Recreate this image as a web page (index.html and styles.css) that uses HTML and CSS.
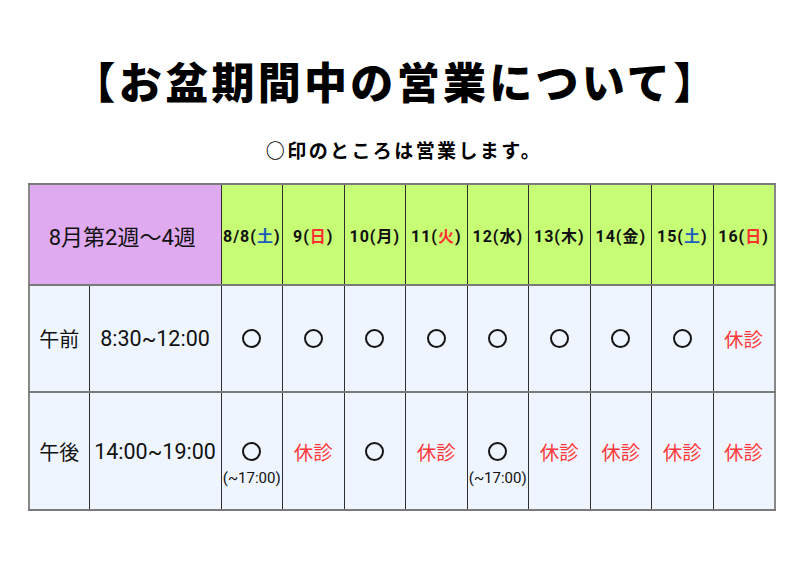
FILE: index.html
```html
<!DOCTYPE html>
<html lang="ja">
<head>
<meta charset="utf-8">
<link rel="stylesheet" href="styles.css">
</head>
<body>
<div class="page">
  <h1 class="title">【お盆期間中の営業について】</h1>
  <p class="note">○印のところは営業します。</p>
  <table class="sched">
    <colgroup>
      <col class="c-label"><col class="c-time">
      <col class="c-day"><col class="c-day"><col class="c-day"><col class="c-day"><col class="c-day"><col class="c-day"><col class="c-day"><col class="c-day"><col class="c-day">
    </colgroup>
    <tr class="head">
      <th colspan="2" class="week">8月第2週～4週</th>
      <th>8/8(<span class="sat">土</span>)</th>
      <th>9(<span class="sun">日</span>)</th>
      <th>10(月)</th>
      <th>11(<span class="sun">火</span>)</th>
      <th>12(水)</th>
      <th>13(木)</th>
      <th>14(金)</th>
      <th>15(<span class="sat">土</span>)</th>
      <th>16(<span class="sun">日</span>)</th>
    </tr>
    <tr class="am">
      <td class="lbl">午前</td>
      <td class="time">8:30~12:00</td>
      <td><span class="ok" role="img" aria-label="○"></span></td>
      <td><span class="ok" role="img" aria-label="○"></span></td>
      <td><span class="ok" role="img" aria-label="○"></span></td>
      <td><span class="ok" role="img" aria-label="○"></span></td>
      <td><span class="ok" role="img" aria-label="○"></span></td>
      <td><span class="ok" role="img" aria-label="○"></span></td>
      <td><span class="ok" role="img" aria-label="○"></span></td>
      <td><span class="ok" role="img" aria-label="○"></span></td>
      <td class="off">休診</td>
    </tr>
    <tr class="pm">
      <td class="lbl">午後</td>
      <td class="time">14:00~19:00</td>
      <td><span class="ok" role="img" aria-label="○"></span><span class="sub">(~17:00)</span></td>
      <td class="off">休診</td>
      <td><span class="ok" role="img" aria-label="○"></span></td>
      <td class="off">休診</td>
      <td><span class="ok" role="img" aria-label="○"></span><span class="sub">(~17:00)</span></td>
      <td class="off">休診</td>
      <td class="off">休診</td>
      <td class="off">休診</td>
      <td class="off">休診</td>
    </tr>
  </table>
</div>
</body>
</html>
```
FILE: styles.css
```css
html, body {
  margin: 0;
  padding: 0;
  background: #ffffff;
}
body {
  font-family: Roboto, "Noto Sans CJK JP", sans-serif;
  color: #111;
}
.page {
  width: 800px;
  height: 566px;
  overflow: hidden;
}
.title {
  margin: 0;
  padding-top: 52px;
  padding-right: 8px;
  height: 56px;
  font-family: "Noto Sans CJK JP", sans-serif;
  font-size: 43px;
  font-weight: 900;
  line-height: 56px;
  text-align: center;
  letter-spacing: 3.3px;
  color: #000;
}
.note {
  margin: 0;
  padding-top: 12px;
  padding-left: 8px;
  height: 72px;
  font-family: "Noto Sans CJK JP", sans-serif;
  font-size: 19px;
  font-weight: 700;
  line-height: 60px;
  letter-spacing: 2.4px;
  text-align: center;
  color: #000;
  box-sizing: border-box;
}
.sched {
  margin-left: 28px;
  margin-top: 3px;
  width: 746px;
  border-collapse: collapse;
  table-layout: fixed;
  border: 2px solid #888888;
}
.c-label { width: 60px; }
.c-time { width: 132px; }
.c-day { width: 61.5px; }
.sched th, .sched td {
  border-left: 1px solid #2e2e2e;
  border-right: 1px solid #2e2e2e;
  border-top: 2px solid #7a7a7a;
  border-bottom: 2px solid #7a7a7a;
  text-align: center;
  vertical-align: middle;
  padding: 0;
}
.head th {
  height: 99px;
  background: #c6fd74;
  font-family: Roboto, "Noto Sans CJK JP", sans-serif;
  font-size: 16px;
  font-weight: 700;
  letter-spacing: 1px;
  color: #111;
  white-space: nowrap;
}
.head th.week {
  background: #dfaaf0;
  font-weight: 400;
  font-size: 22px;
  letter-spacing: 0;
  padding-right: 6px;
}
.sat { color: #1b5cbc; }
.sun { color: #ff3030; }
.am td {
  height: 105px;
  background: #eef5ff;
}
.pm td {
  height: 116px;
  background: #eef5ff;
}
.lbl {
  font-size: 20px;
  font-family: "Noto Sans CJK JP", sans-serif;
}
.time {
  font-size: 21.5px;
}
.ok {
  display: block;
  width: 15px;
  height: 15px;
  margin: 0 auto;
  border: 2px solid #141414;
  border-radius: 50%;
}
.pm .ok + .sub {
  display: block;
  font-size: 15px;
  line-height: 16px;
  margin-top: 9px;
  margin-bottom: -25px;
}
.off {
  color: #ff3a3a;
  font-family: "Noto Sans CJK JP", sans-serif;
  font-size: 19.5px;
}
```
